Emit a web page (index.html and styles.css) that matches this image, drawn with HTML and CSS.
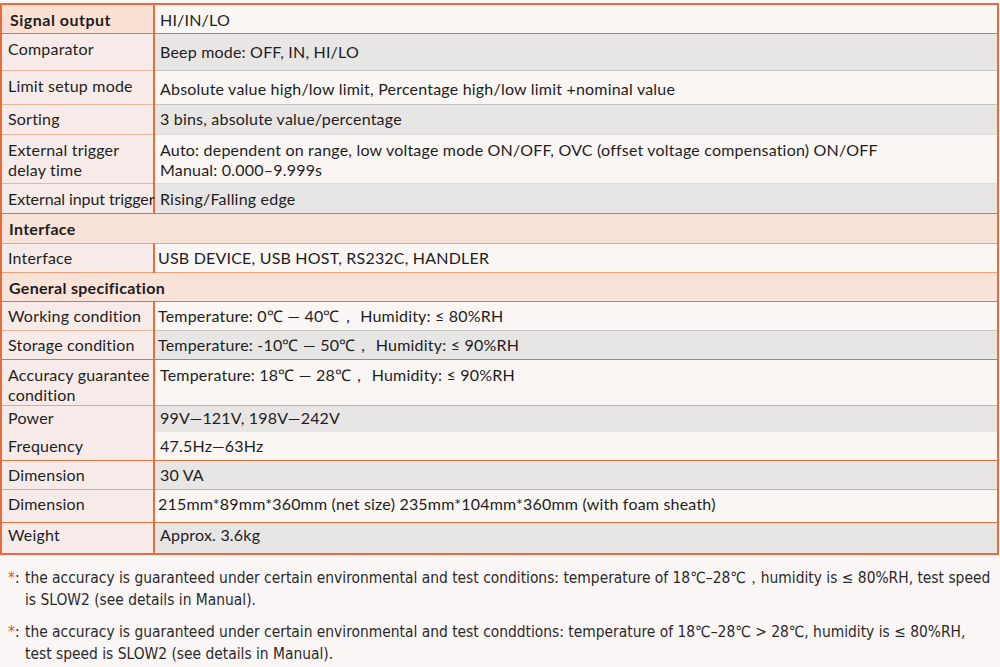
FILE: index.html
```html
<!DOCTYPE html>
<html>
<head>
<meta charset="utf-8">
<link rel="stylesheet" href="styles.css">
</head>
<body>
<table class="spec">
  <colgroup><col class="c1"><col class="c2"></colgroup>
  <tr class="r h29 bo"><th class="lbl first">Signal output</th><td class="w">HI/IN/LO</td></tr>
  <tr class="r h37 bg"><th class="lbl">Comparator</th><td class="g mid">Beep mode: OFF, IN, HI/LO</td></tr>
  <tr class="r h34 bg"><th class="lbl">Limit setup mode</th><td class="w mid">Absolute value high/low limit, Percentage high/low limit +nominal value</td></tr>
  <tr class="r h30 bw up"><th class="lbl">Sorting</th><td class="g">3 bins, absolute value/percentage</td></tr>
  <tr class="r h49 bw"><th class="lbl">External trigger<br>delay time</th><td class="w">Auto: dependent on range, low voltage mode ON/OFF, OVC (offset voltage compensation) ON/OFF<br>Manual: 0.000–9.999s</td></tr>
  <tr class="r h30 bo"><th class="lbl nowrap">External input trigger</th><td class="g">Rising/Falling edge</td></tr>
  <tr class="sec h30 bl"><th colspan="2">Interface</th></tr>
  <tr class="r h29 bl up"><th class="lbl">Interface</th><td class="w tight">USB DEVICE, USB HOST, RS232C, HANDLER</td></tr>
  <tr class="sec h29 bo"><th colspan="2">General specification</th></tr>
  <tr class="r h29 bg up"><th class="lbl">Working condition</th><td class="w tight">Temperature: 0℃ — 40℃， Humidity: ≤ 80%RH</td></tr>
  <tr class="r h29 bo up"><th class="lbl">Storage condition</th><td class="g tight">Temperature: -10℃ — 50℃， Humidity: ≤ 90%RH</td></tr>
  <tr class="r h45 bl"><th class="lbl">Accuracy guarantee<br>condition</th><td class="w">Temperature: 18℃ — 28℃， Humidity: ≤ 90%RH</td></tr>
  <tr class="r h27 bn up2"><th class="lbl">Power</th><td class="g">99V—121V, 198V—242V</td></tr>
  <tr class="r h28 bo up"><th class="lbl">Frequency</th><td class="w">47.5Hz—63Hz</td></tr>
  <tr class="r h29 bl up"><th class="lbl">Dimension</th><td class="g">30 VA</td></tr>
  <tr class="r h33 bo up"><th class="lbl">Dimension</th><td class="w tight">215mm*89mm*360mm (net size) 235mm*104mm*360mm (with foam sheath)</td></tr>
  <tr class="r h32 bo up2"><th class="lbl">Weight</th><td class="g">Approx. 3.6kg</td></tr>
</table>
<div class="notes">
  <p class="note"><span class="ast">*</span><span class="colon">:</span><span class="txt">the accuracy is guaranteed under certain environmental and test conditions: temperature of 18℃–28℃，humidity is ≤ 80%RH, test speed<br>is SLOW2 (see details in Manual).</span></p>
  <p class="note"><span class="ast">*</span><span class="colon">:</span><span class="txt">the accuracy is guaranteed under certain environmental and test conddtions: temperature of 18℃–28℃ &gt; 28℃, humidity is ≤ 80%RH,<br>test speed is SLOW2 (see details in Manual).</span></p>
</div>
</body>
</html>
```
FILE: styles.css
```css
html, body {
  margin: 0;
  padding: 0;
  background: #faf6f5;
}
body {
  font-family: Lato, "Open Sans", sans-serif;
  color: #1e1e1e;
  width: 1000px;
  height: 667px;
  overflow: hidden;
  padding-top: 3px;
  box-sizing: border-box;
}
.spec {
  width: 999px;
  table-layout: fixed;
  border-collapse: collapse;
  border: 2px solid #e86c3c;
  font-size: 16px;
  line-height: 20px;
  letter-spacing: 0.2px;
}
.c1 { width: 153px; }
.spec th, .spec td {
  padding: 0 2px 0 6px;
  text-align: left;
  vertical-align: top;
  font-weight: normal;
  padding-top: 5px;
}
.spec td {
  padding-left: 5px;
}
.spec td.tight { padding-left: 3px; }
.spec td.mid { padding-top: 8px; }
.spec .up > th, .spec .up > td { padding-top: 4px; }
.spec .up2 > th, .spec .up2 > td { padding-top: 2px; }
.lbl {
  background: #f6ebe8;
  border-right: 2px solid #e86c3c;
}
.lbl.first {
  background: #fbe1d4;
  font-weight: bold;
  letter-spacing: 0.5px;
  padding-left: 8px;
}
.nowrap { white-space: nowrap; padding-right: 0; letter-spacing: -0.1px; overflow: visible; }
.w { background: #faf6f4; }
.g { background: #e8e5e5; }
.sec th {
  background: #f9e2d8;
  font-weight: bold;
  letter-spacing: 0.3px;
  padding-left: 7px;
}
.h27 { height: 27px; }
.h28 { height: 28px; }
.h29 { height: 29px; }
.h30 { height: 30px; }
.h32 { height: 32px; }
.h33 { height: 33px; }
.h34 { height: 34px; }
.h37 { height: 37px; }
.h45 { height: 45px; }
.h49 { height: 49px; }
.spec tr > * { box-sizing: border-box; }
.bo > * { border-bottom: 1.5px solid #e8703c; }
.bl > * { border-bottom: 1.5px solid #f0a27c; }
.bg > th { border-bottom: 1.5px solid #eeb59a; }
.bg > td { border-bottom: 1.5px solid #c8c5c5; }
.bw > th { border-bottom: 1.5px solid #eeb59a; }
.bw > td { border-bottom: 1.5px solid #e3dada; }
.bn > * { border-bottom: 0; }
.notes {
  font-family: "Liberation Sans Narrow", "DejaVu Sans Condensed", sans-serif;
  font-stretch: condensed;
  font-size: 15.4px;
  line-height: 22px;
  color: #2a2a2a;
  padding: 12px 0 0 8px;
}
.note {
  margin: 0 0 10px 0;
  display: flex;
  white-space: nowrap;
}
.ast { color: #e8502a; width: 7px; flex: none; }
.colon { width: 10px; flex: none; }
.txt { flex: 1; }
```
